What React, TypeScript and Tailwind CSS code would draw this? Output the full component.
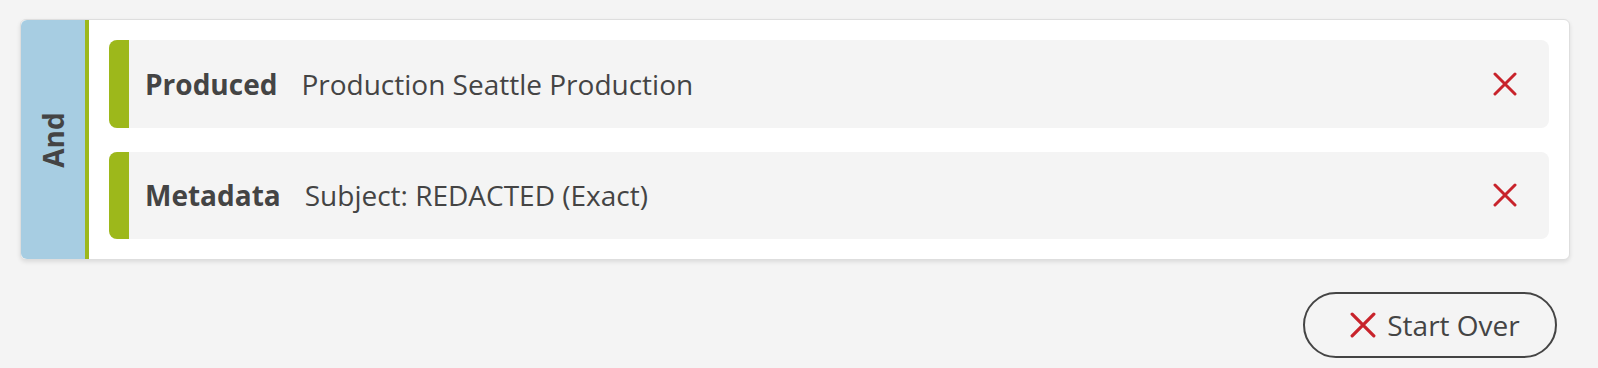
import React from 'react';

const font = { fontFamily: '"Open Sans", "Noto Sans", sans-serif' };

function RedX({ size, stroke = 3 }: { size: number; stroke?: number }) {
  return (
    <svg width={size} height={size} viewBox="0 0 24 24" className="shrink-0">
      <path d="M2 2 L22 22 M22 2 L2 22" stroke="#c8232b" strokeWidth={stroke} strokeLinecap="round" fill="none" />
    </svg>
  );
}

interface Rule {
  label: string;
  value: string;
}

const rules: Rule[] = [
  { label: 'Produced', value: 'Production Seattle Production' },
  { label: 'Metadata', value: 'Subject: REDACTED (Exact)' },
];

function RuleRow({ rule }: { rule: Rule }) {
  return (
    <div className="flex h-[88px] items-center rounded-lg bg-[#f4f4f4]">
      <div className="h-full w-5 shrink-0 rounded-l-lg bg-[#9db81b]" />
      <span className="ml-4 text-[28px] font-bold text-[#444]">{rule.label}</span>
      <span className="ml-6 text-[28px] text-[#444]">{rule.value}</span>
      <button className="ml-auto mr-[32px] flex items-center">
        <RedX size={24} />
      </button>
    </div>
  );
}

export default function App() {
  return (
    <div className="min-h-[368px] bg-[#f4f4f4] pl-5 pr-7 pt-[19px]" style={font}>
      <div className="flex h-[241px] rounded-md border border-[#dedede] bg-white shadow-[0_2px_4px_rgba(0,0,0,0.1)]">
        <div className="flex w-[64px] shrink-0 items-center justify-center rounded-l-md bg-[#a7cde2]">
          <span className="-rotate-90 text-[28px] font-bold text-[#444]">And</span>
        </div>
        <div className="w-1 shrink-0 bg-[#9db81b]" />
        <div className="flex flex-1 flex-col gap-6 p-5">
          {rules.map((r) => (
            <RuleRow key={r.label} rule={r} />
          ))}
        </div>
      </div>
      <div className="mt-[32px] flex justify-end pr-[13px]">
        <button className="flex h-[66px] w-[254px] items-center justify-center gap-[11px] rounded-full border-2 border-[#444] pl-[10px] text-[28px] text-[#444]">
          <RedX size={26} />
          <span>Start Over</span>
        </button>
      </div>
    </div>
  );
}
